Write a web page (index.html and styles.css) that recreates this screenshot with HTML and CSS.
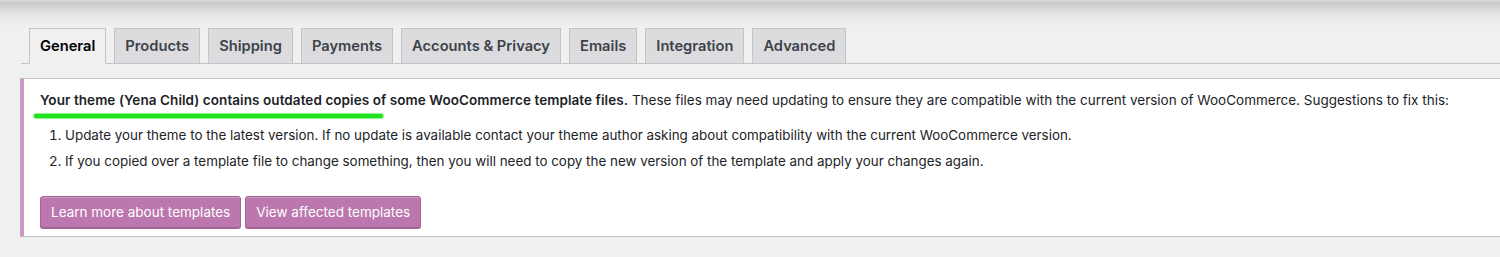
FILE: index.html
```html
<!DOCTYPE html>
<html lang="en">
<head>
  <meta charset="UTF-8" />
  <meta name="viewport" content="width=device-width, initial-scale=1.0"/>
  <title>WooCommerce Settings</title>
  <link rel="stylesheet" href="styles.css">
</head>
<body>

  <div class="topbar"></div>

  <nav class="nav-tabs">
    <a class="nav-tab active">General</a>
    <a class="nav-tab">Products</a>
    <a class="nav-tab">Shipping</a>
    <a class="nav-tab">Payments</a>
    <a class="nav-tab">Accounts &amp; Privacy</a>
    <a class="nav-tab">Emails</a>
    <a class="nav-tab">Integration</a>
    <a class="nav-tab">Advanced</a>
  </nav>

  <!-- Outdated templates notice -->
  <div class="notice">
    <p class="notice-lead">
      <strong>Your theme (Yena Child) contains outdated copies of some WooCommerce template files.</strong>
      These files may need updating to ensure they are compatible with the current version of WooCommerce. Suggestions to fix this:
      <span class="highlight"></span>
    </p>
    <ol>
      <li>Update your theme to the latest version. If no update is available contact your theme author asking about compatibility with the current WooCommerce version.</li>
      <li>If you copied over a template file to change something, then you will need to copy the new version of the template and apply your changes again.</li>
    </ol>
    <div class="actions">
      <a class="button">Learn more about templates</a>
      <a class="button">View affected templates</a>
    </div>
  </div>

</body>
</html>
```

FILE: styles.css
```css
body {
  margin: 0;
  background: #f0f0f1;
  font-family: "Inter", "Liberation Sans", sans-serif;
  font-size: 13.5px;
  color: #1d2327;
  overflow: hidden;
}
.topbar {
  height: 28px;
  background: linear-gradient(#e4e4e5 0, #d2d2d4 1px, #c9c9cb 3px, #dcdcde 10px, #eaeaeb 18px, #f0f0f1 28px);
}
.nav-tabs {
  display: flex;
  gap: 8px;
  margin-left: 21px;
  padding-left: 8px;
  border-bottom: 1px solid #c3c4c7;
}
.nav-tab {
  font-size: 14.7px;
  font-weight: 600;
  line-height: 24px;
  padding: 5px 10px;
  border: 1px solid #c3c4c7;
  background: #dcdcde;
  color: #3c434a;
  margin-bottom: -1px;
}
.nav-tab.active {
  background: #f0f0f1;
  border-bottom-color: #f0f0f1;
  color: #000;
}

/* Notice */
.notice {
  margin: 14px -20px 0 20px;
  background: #fff;
  border: 1px solid #c3c4c7;
  border-left: 4px solid #cc99c2;
  padding: 11px 16px 8px;
}
.notice-lead {
  position: relative;
  margin: 0;
  line-height: 20px;
}
.notice-lead strong {
  font-weight: 600;
  letter-spacing: 0.07px;
}
.highlight {
  position: absolute;
  left: -6px;
  top: 24px;
  width: 349px;
  height: 4px;
  border-radius: 3px;
  background: #1ee21a;
  box-shadow: 0 0 1px 1px rgba(30, 226, 26, 0.5);
}
ol {
  margin: 15px 0 0;
  padding-left: 25px;
  font-size: 13.4px;
  line-height: 20px;
}
li {
  margin-bottom: 6px;
}
.actions {
  display: flex;
  gap: 4px;
  margin-top: 25px;
}
.button {
  display: inline-block;
  height: 30px;
  line-height: 30px;
  padding: 0 10px;
  border: 1px solid #a36597;
  border-radius: 3px;
  background: #bb77ae;
  color: #fff;
  font-size: 13.5px;
  box-shadow: inset 0 1px 0 rgba(255,255,255,0.25), 0 1px 0 #a36597;
}
```
